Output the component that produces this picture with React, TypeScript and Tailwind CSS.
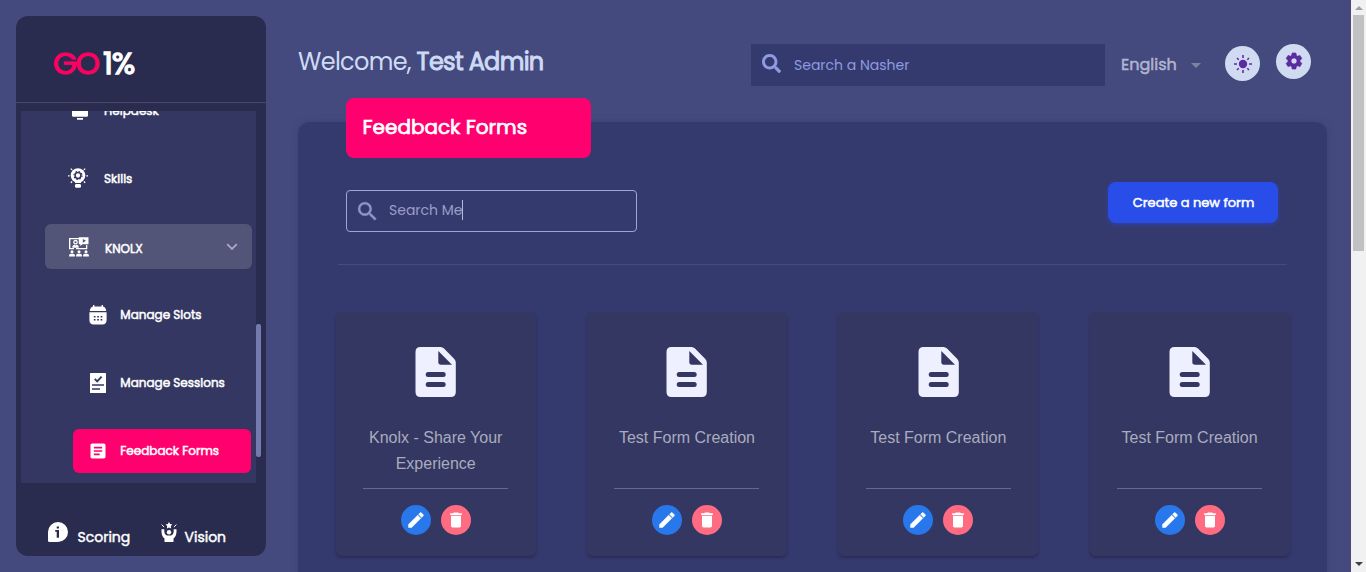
import type { ReactNode } from "react";
import { FaSearch } from "react-icons/fa";
import { MdArticle, MdDelete, MdEdit, MdSearch, MdSettings } from "react-icons/md";

const forms = ["Knolx - Share Your Experience", "Test Form Creation", "Test Form Creation", "Test Form Creation"];

function HelpdeskIcon() {
  return (
    <svg width="20" height="20" viewBox="0 0 20 20" fill="#fff">
      <path d="M4 1h12a2 2 0 0 1 2 2v12.400a1.300 1.300 0 0 1-1.300 1.300H3.300A1.300 1.300 0 0 1 2 15.400V3a2 2 0 0 1 2-2zM7 18h6v1.800H7z" />
    </svg>
  );
}

function SkillsIcon() {
  return (
    <svg width="20" height="20" viewBox="0 0 20 20" fill="none">
      <circle cx="10" cy="7.500" r="7.300" fill="#fff" />
      <path d="M7 12h6v3H7z" fill="#fff" />
      <rect x="7" y="16" width="6" height="3.800" rx="1.400" fill="#fff" />
      <circle cx="10" cy="7.500" r="2.900" stroke="#343761" strokeWidth="1.500" />
      <circle cx="10" cy="7.500" r="4" stroke="#343761" strokeWidth="1.200" strokeDasharray="1.570 1.570" />
      <path d="M0 7.800h1.600M18.400 7.800H20M2.800.6l1.300 1.300M17.200.6l-1.300 1.300M2.800 14.800l1.300-1.300M17.200 14.800l-1.300-1.300" stroke="#fff" strokeWidth="1.300" />
    </svg>
  );
}

function KnolxIcon() {
  return (
    <svg width="20" height="20" viewBox="0 0 20 20" fill="#fff">
      <path d="M0 1h10v1.300H1.400V11H5v1.300H0zM17 8h1.300v4.300H7V11h10z" />
      <path d="M9.800.3h9.700v6.900h-6L11.300 9V7.200H9.800z" />
      <path d="M13.800 1.900v3.800L17 3.800z" fill="#525577" />
      <circle cx="6.500" cy="5.200" r="1.700" fill="none" stroke="#fff" strokeWidth="1.300" />
      <path d="M3.400 10.700V9l1.900-1.500 1.200 1 1.200-1L9.700 9v1.700z" />
      <circle cx="3" cy="14.700" r="1.500" />
      <circle cx="10" cy="14.700" r="1.500" />
      <circle cx="17" cy="14.700" r="1.500" />
      <path d="M.1 19.600v-1.300q0-1.500 1.700-1.500h2.400q1.700 0 1.700 1.500v1.300zM7.100 19.600v-1.300q0-1.500 1.700-1.500h2.400q1.700 0 1.700 1.500v1.300zM14.100 19.600v-1.300q0-1.500 1.700-1.500h2.400q1.700 0 1.700 1.500v1.300z" />
    </svg>
  );
}

function SlotsIcon() {
  return (
    <svg width="18" height="20" viewBox="0 0 18 20" fill="#fff">
      <path d="M4 0h1.400v1.500h7.200V0H14v1.600q2.800.6 3.200 4.400H.8Q1.200 2.200 4 1.600z" />
      <path d="M.4 7.300h17.200v7.500q0 4.700-4.200 4.700H4.600Q.4 19.500.4 14.800z" />
      <path d="M4.800 11H6.500v1.500H4.800zM8.200 11h1.700v1.500H8.200zM11.600 11h1.700v1.500h-1.700zM4.800 14H6.500v1.600H4.800zM8.200 14h1.700v1.600H8.200zM11.600 14h1.700v1.600h-1.700z" fill="#343761" />
    </svg>
  );
}

function SessionsIcon() {
  return (
    <svg width="16" height="20" viewBox="0 0 16 20" fill="none">
      <rect width="16" height="20" rx=".6" fill="#fff" />
      <path d="M4.700 5.800l2.500 2.500 4.400-4.600" stroke="#343761" strokeWidth="1.900" />
      <path d="M2 12h12M2 16h8" stroke="#343761" strokeWidth="1.700" />
    </svg>
  );
}

function InfoIcon() {
  return (
    <svg width="20" height="20" viewBox="0 0 20 20" fill="#fff">
      <path d="M10 0a10 10 0 1 1 0 20H1.500A1.500 1.500 0 0 1 0 18.500V10A10 10 0 0 1 10 0z" />
      <path d="M8.700 4.500H11v2.100H8.700zM7.200 8H11v7.700H8.700v-6H7.200z" fill="#2a2c4f" />
    </svg>
  );
}

function VisionIcon() {
  return (
    <svg width="16" height="20" viewBox="0 0 16 20" fill="#fff">
      <path d="M8 0l1.100 2 2.300.4-1.600 1.700.3 2.300L8 5.500l-2.100.9.300-2.300-1.600-1.700 2.300-.4z" />
      <path d="M.6 2.600l2.500 2.400M15.400 2.600L12.900 5" stroke="#fff" strokeWidth="1" />
      <circle cx="8" cy="10.200" r="2.200" />
      <path d="M.5 7.300h2.800q-.4 5.300 2.700 6.200h4q3.100-.9 2.700-6.200h2.800q.5 7-3 9.100V20h-9v-3.600Q0 14.300.5 7.300z" />
    </svg>
  );
}

function SunIcon() {
  return (
    <svg width="18" height="18" viewBox="0 0 18 18" fill="none">
      <circle cx="9" cy="9" r="4.200" fill="#5b2b9f" />
      <path
        d="M9 0v3M9 15v3M0 9h3M15 9h3M3 3l1.700 1.700M13.300 13.300L15 15M3 15l1.700-1.700M13.300 4.700L15 3"
        stroke="#5b2b9f"
        strokeWidth="1.600"
      />
    </svg>
  );
}

function DocumentIcon() {
  return (
    <svg width="41" height="50" viewBox="0 0 41 50" className="block">
      <path
        fillRule="evenodd"
        fill="#eef0ff"
        d="M5.500 0H25.500q2 0 3.500 1.500L39.300 12q1.500 1.500 1.500 3.500V45q0 5-5 5H5.500q-5 0-5-5V5q0-5 5-5zM23.300 4v11q0 2.700 2.700 2.700H37zM13.200 25a2.500 2.500 0 0 0 0 5h15a2.500 2.500 0 0 0 0-5zM13.200 35a2.500 2.500 0 0 0 0 5h15a2.500 2.500 0 0 0 0-5z"
      />
    </svg>
  );
}

function Sidebar() {
  return (
    <aside className="mt-4 ml-4 flex h-[540px] w-[250px] shrink-0 flex-col overflow-hidden rounded-xl bg-[#2a2c4f] text-white">
      <div className="flex h-[87px] shrink-0 items-center border-b border-[#484a68] pt-2 pl-[37px] text-[31px] leading-none">
        <span className="w-[50px] tracking-[-1.700px] text-[#ff0062] [-webkit-text-stroke:1.100px_#ff0062]">GO</span>
        <span className="tracking-[-1.200px] [-webkit-text-stroke:1.300px_#fff]">1%</span>
      </div>
      <div className="mt-2 flex h-[372px] shrink-0">
        <nav className="ml-[5px] w-[235px] overflow-hidden bg-[#343761] text-[12px] leading-[18px] [-webkit-text-stroke:0.500px_#fff]">
          <div className="-mt-[12px] flex h-[22px] items-center pl-[49px]">
            <HelpdeskIcon />
            <span className="mt-0.5 ml-[14px]">Helpdesk</span>
          </div>
          <div className="mt-[46px] flex h-[22px] items-center pl-[47px]">
            <SkillsIcon />
            <span className="mt-0.5 ml-4">Skills</span>
          </div>
          <div className="mt-[35px] ml-6 flex h-[45px] w-[207px] items-center rounded-md bg-[#525577] pr-[14px] pl-6">
            <KnolxIcon />
            <span className="mt-1 ml-4">KNOLX</span>
            <svg className="ml-auto" width="12" height="8" viewBox="0 0 12 8" fill="none">
              <path d="M1.200 1.200L6 6l4.800-4.800" stroke="#a8aac0" strokeWidth="1.800" />
            </svg>
          </div>
          <div className="mt-[35px] flex h-[22px] items-center pl-[68px]">
            <SlotsIcon />
            <span className="ml-[13.300px]">Manage Slots</span>
          </div>
          <div className="mt-[46px] flex h-[22px] items-center pl-[69px]">
            <SessionsIcon />
            <span className="ml-[14.300px]">Manage Sessions</span>
          </div>
          <div className="mt-[35px] ml-[52px] flex h-[44px] w-[178px] items-center rounded-md bg-[#ff006e] pl-[15px]">
            <MdArticle size={20} />
            <span className="ml-[12.300px]">Feedback Forms</span>
          </div>
        </nav>
        <div className="mt-[213px] h-[133px] w-[5px] rounded-[2px] bg-[#747aad]" />
      </div>
      <div className="flex pt-[39px] pl-8 text-[14px] leading-[22px] [-webkit-text-stroke:0.450px_#fff]">
        <InfoIcon />
        <span className="mt-1 ml-[9.500px] w-[83.500px]">Scoring</span>
        <VisionIcon />
        <span className="mt-1 ml-[7.500px]">Vision</span>
      </div>
    </aside>
  );
}

function RoundButton({ className, children }: { className: string; children: ReactNode }) {
  return <button className={`flex items-center justify-center rounded-full ${className}`}>{children}</button>;
}

function TopBar() {
  return (
    <header className="flex h-[54px]">
      <h1 className="mt-[-1px] w-[453px] text-[24px] leading-[38px] tracking-[-0.700px] text-[#cfdbf5]">
        Welcome, <span className="[-webkit-text-stroke:0.900px_#cfdbf5]">Test Admin</span>
      </h1>
      <div className="flex h-[42px] w-[354px] items-center bg-[#353a6e] pl-[11px] text-[14px] text-[#8f9ae0]">
        <FaSearch size={19} className="mb-1" />
        <span className="ml-[13px]">Search a Nasher</span>
      </div>
      <div className="ml-4 flex h-[42px] w-[104px] items-center text-[16px] text-[#b2b5d0]">
        <span className="w-[70px] [-webkit-text-stroke:0.500px_#b2b5d0]">English</span>
        <span className="mt-px h-0 w-0 border-x-[5px] border-t-[5px] border-x-transparent border-t-[#7f81a0]" />
      </div>
      <RoundButton className="mt-0.5 h-[35px] w-[35px] bg-[#d0dbf2]">
        <SunIcon />
      </RoundButton>
      <RoundButton className="ml-4 h-[35px] w-[35px] bg-[#d0dbf2] text-[#5b2b9f]">
        <MdSettings size={20} className="mb-px [&>path:last-child]:stroke-[#5b2b9f] [&>path:last-child]:[stroke-width:0.800]" />
      </RoundButton>
    </header>
  );
}

function FormCard({ title }: { title: string }) {
  return (
    <article className="flex h-[244px] w-[200px] shrink-0 flex-col items-center rounded-md bg-[#343761] pt-[35px] shadow-[0_2px_3px_rgba(20,22,50,0.4)]">
      <DocumentIcon />
      <h3 className="mt-7 h-[63px] w-[150px] text-center font-['Liberation_Sans',Arial,sans-serif] text-[16px] leading-[26px] text-[#a9acbf]">
        {title}
      </h3>
      <hr className="w-[145px] border-t border-[#666989]" />
      <div className="mt-4 flex gap-[10px] text-white">
        <RoundButton className="h-[30px] w-[30px] bg-[#2878eb]">
          <MdEdit size={20} className="[&>path:last-child]:stroke-white [&>path:last-child]:[stroke-width:0.600]" />
        </RoundButton>
        <RoundButton className="h-[30px] w-[30px] bg-[#ff6b81]">
          <MdDelete size={20} />
        </RoundButton>
      </div>
    </article>
  );
}

function FormsPanel() {
  return (
    <section className="mt-6 h-[470px] w-[1029px] rounded-t-xl bg-[#353a6e] shadow-[0_0_6px_rgba(53,58,110,0.5)]">
      <div className="flow-root">
        <h2 className="-mt-6 ml-12 flex h-[60px] w-[245px] items-center rounded-lg bg-[#ff006e] pb-[3px] pl-[16.500px] text-[20px] text-white [-webkit-text-stroke:0.700px_#fff]">
          Feedback Forms
        </h2>
      </div>
      <div className="flex justify-between pt-6 pr-[49px] pl-12">
        <div className="mt-2 flex h-[42px] w-[291px] items-center rounded-[4px] border border-[#9fa5d3] pl-2 text-[14px] text-[#999fc8]">
          <MdSearch
            size={25}
            className="text-[#8f96c8] [&>path:last-child]:stroke-[#8f96c8] [&>path:last-child]:[stroke-width:0.400]"
          />
          <span className="mb-0.5 ml-[9px]">Search Me</span>
          <span className="mb-0.5 -ml-px h-5 w-px bg-[#b4bbe2]" />
        </div>
        <button className="h-[41px] w-[170px] rounded-lg bg-[#284de8] pl-px text-[13px] text-white shadow-[0_2px_5px_rgba(40,77,232,0.4)] [-webkit-text-stroke:0.500px_#fff]">
          Create a new form
        </button>
      </div>
      <hr className="mt-8 ml-10 w-[949px] border-t border-[#474b7b]" />
      <div className="mt-[47px] flex gap-[51.300px] pl-[37.700px]">
        {forms.map((title, index) => (
          <FormCard key={index} title={title} />
        ))}
      </div>
    </section>
  );
}

function PageScrollbar() {
  return (
    <div className="flex w-[15px] shrink-0 flex-col items-center bg-[#f1f1f1] pt-[6px] pb-[6px]">
      <span className="h-0 w-0 border-x-[4px] border-b-[4px] border-x-transparent border-b-[#a0a0a0]" />
      <span className="mt-[5px] h-[236px] w-[11px] bg-[#c1c1c1]" />
      <span className="mt-auto h-0 w-0 border-x-[4px] border-t-[4px] border-x-transparent border-t-[#404040]" />
    </div>
  );
}

export default function App() {
  return (
    <div className="flex h-[572px] w-[1366px] overflow-hidden bg-[#44497e] font-['Poppins',Inter,sans-serif]">
      <Sidebar />
      <main className="ml-8 min-w-0 flex-1 pt-11">
        <TopBar />
        <FormsPanel />
      </main>
      <PageScrollbar />
    </div>
  );
}
